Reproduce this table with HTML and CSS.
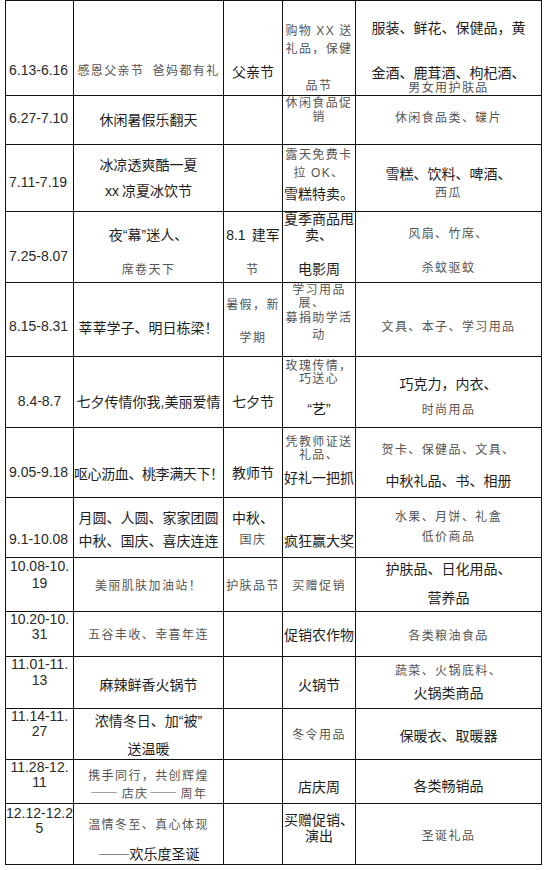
FILE: index.html
```html
<!DOCTYPE html>
<html lang="zh-CN">
<head>
<meta charset="utf-8">
<title>促销活动安排表</title>
<link rel="stylesheet" href="styles.css">
</head>
<body>
<div class="sheet">
  <div class="row r1">
    <div class="cell left p62"><div class="d">6.13-6.16</div></div>
    <div class="cell p63"><div class="s pre">感恩父亲节  爸妈都有礼</div></div>
    <div class="cell p62"><div class="b">父亲节</div></div>
    <div class="cell p23"><div class="s pre">购物 <span class="l">XX</span> 送</div><div class="s m5">礼品，保健</div><div class="s m25">品节</div></div>
    <div class="cell p18"><div class="b">服装、鲜花、保健品，黄</div><div class="b m29">金酒、鹿茸酒、枸杞酒、</div><div class="s m1">男女用护肤品</div></div>
  </div>
  <div class="row r2">
    <div class="cell left p15"><div class="d">6.27-7.10</div></div>
    <div class="cell p15"><div class="b">休闲暑假乐翻天</div></div>
    <div class="cell"></div>
    <div class="cell"><div class="s">休闲食品促</div><div class="s m2">销</div></div>
    <div class="cell p15"><div class="s">休闲食品类、碟片</div></div>
  </div>
  <div class="row r3">
    <div class="cell left p30"><div class="d">7.11-7.19</div></div>
    <div class="cell p11"><div class="b">冰凉透爽酷一夏</div><div class="b m10 pre"><span class="l">xx</span> 凉夏冰饮节</div></div>
    <div class="cell"></div>
    <div class="cell p3"><div class="s">露天免费卡</div><div class="s m6 pre">拉 <span class="l">OK</span>、</div><div class="b m6">雪糕特卖。</div></div>
    <div class="cell p20"><div class="b">雪糕、饮料、啤酒、</div><div class="s m5">西瓜</div></div>
  </div>
  <div class="row r4">
    <div class="cell left p37"><div class="d">7.25-8.07</div></div>
    <div class="cell p14"><div class="b">夜<span class="l">“</span>幕<span class="l">”</span>迷人、</div><div class="s m20">席卷天下</div></div>
    <div class="cell p14"><div class="b pre"><span class="l">8.1</span>  建军</div><div class="s m20">节</div></div>
    <div class="cell"><div class="b mneg2">夏季商品甩</div><div class="b">卖、</div><div class="b m18">电影周</div></div>
    <div class="cell p15"><div class="s">风扇、竹席、</div><div class="s m22">杀蚊驱蚊</div></div>
  </div>
  <div class="row r5">
    <div class="cell left p36"><div class="d">8.15-8.31</div></div>
    <div class="cell p36"><div class="b">莘莘学子、明日栋梁！</div></div>
    <div class="cell p15"><div class="s">暑假，新</div><div class="s m21">学期</div></div>
    <div class="cell"><div class="s">学习用品</div><div class="s m1 shift">展、</div><div class="s m3">募捐助学活</div><div class="s m5">动</div></div>
    <div class="cell p37"><div class="s">文具、本子、学习用品</div></div>
  </div>
  <div class="row r6">
    <div class="cell p37"><div class="d">8.4-8.7</div></div>
    <div class="cell p36"><div class="b">七夕传情你我<span class="l">,</span>美丽爱情</div></div>
    <div class="cell p36"><div class="b">七夕节</div></div>
    <div class="cell p2"><div class="s">玫瑰传情，</div><div class="s m1">巧送心</div><div class="b m16"><span class="l">“</span>艺<span class="l">”</span></div></div>
    <div class="cell p18"><div class="b">巧克力，内衣、</div><div class="s m12">时尚用品</div></div>
  </div>
  <div class="row r7">
    <div class="cell left p37"><div class="d">9.05-9.18</div></div>
    <div class="cell p37"><div class="b tight">呕心沥血、桃李满天下！</div></div>
    <div class="cell p36"><div class="b">教师节</div></div>
    <div class="cell p7"><div class="s">凭教师证送</div><div class="s m1">礼品、</div><div class="b m9">好礼一把抓</div></div>
    <div class="cell p15"><div class="s">贺卡、保健品、文具、</div><div class="b m17">中秋礼品、书、相册</div></div>
  </div>
  <div class="row r8">
    <div class="cell left p34"><div class="d">9.1-10.08</div></div>
    <div class="cell p11"><div class="b">月圆、人圆、家家团圆</div><div class="b m7">中秋、国庆、喜庆连连</div></div>
    <div class="cell p11"><div class="b">中秋、</div><div class="s m8">国庆</div></div>
    <div class="cell p34"><div class="b">疯狂赢大奖</div></div>
    <div class="cell p12"><div class="s">水果、月饼、礼盒</div><div class="s m8">低价商品</div></div>
  </div>
  <div class="row r9">
    <div class="cell p1"><div class="d">10.08-10.</div><div class="d m2">19</div></div>
    <div class="cell p21"><div class="s">美丽肌肤加油站！</div></div>
    <div class="cell p21"><div class="s">护肤品节</div></div>
    <div class="cell p21"><div class="s">买赠促销</div></div>
    <div class="cell p2"><div class="b">护肤品、日化用品、</div><div class="b m13">营养品</div></div>
  </div>
  <div class="row r10">
    <div class="cell"><div class="d">10.20-10.</div><div class="d">31</div></div>
    <div class="cell p16"><div class="s">五谷丰收、幸喜年连</div></div>
    <div class="cell"></div>
    <div class="cell p14"><div class="b">促销农作物</div></div>
    <div class="cell p17"><div class="s">各类粮油食品</div></div>
  </div>
  <div class="row r11">
    <div class="cell"><div class="d">11.01-11.</div><div class="d m1">13</div></div>
    <div class="cell p19"><div class="b">麻辣鲜香火锅节</div></div>
    <div class="cell"></div>
    <div class="cell p19"><div class="b">火锅节</div></div>
    <div class="cell p7"><div class="s">蔬菜、火锅底料、</div><div class="b m8">火锅类商品</div></div>
  </div>
  <div class="row r12">
    <div class="cell"><div class="d">11.14-11.</div><div class="d">27</div></div>
    <div class="cell p3"><div class="b">浓情冬日、加<span class="l">“</span>被<span class="l">”</span></div><div class="b m11">送温暖</div></div>
    <div class="cell"></div>
    <div class="cell p19"><div class="s">冬令用品</div></div>
    <div class="cell p18"><div class="b">保暖衣、取暖器</div></div>
  </div>
  <div class="row r13">
    <div class="cell"><div class="d">11.28-12.</div><div class="d">11</div></div>
    <div class="cell p9"><div class="s">携手同行，共创辉煌</div><div class="s m6 pre"><span class="dash">——</span> 店庆<span class="dash">——</span> 周年</div></div>
    <div class="cell"></div>
    <div class="cell p18"><div class="b">店庆周</div></div>
    <div class="cell p17"><div class="b">各类畅销品</div></div>
  </div>
  <div class="row r14">
    <div class="cell p2"><div class="d">12.12-12.2</div><div class="d">5</div></div>
    <div class="cell p14"><div class="s">温情冬至、真心体现</div><div class="b m15"><span class="dash">——</span>欢乐度圣诞</div></div>
    <div class="cell"></div>
    <div class="cell p7"><div class="b">买赠促销、</div><div class="b">演出</div></div>
    <div class="cell p25"><div class="s">圣诞礼品</div></div>
  </div>
</div>
</body>
</html>
```

FILE: styles.css
```css
html, body {
  margin: 0;
  padding: 0;
  background: #ffffff;
}

body {
  font-family: "Noto Sans CJK SC", "Noto Sans", sans-serif;
  color: #222222;
}

.sheet {
  margin-left: 5px;
  width: 537px;
  box-sizing: border-box;
  border-left: 1px solid #111111;
  border-top: 1px solid #111111;
}

.row {
  display: grid;
  grid-template-columns: 68px 150px 59px 73px 186px;
}

.r1 { height: 95px; }
.r2 { height: 49px; }
.r3 { height: 67px; }
.r4 { height: 71px; }
.r5 { height: 74px; }
.r6 { height: 71px; }
.r7 { height: 70px; }
.r8 { height: 60px; }
.r9 { height: 54px; }
.r10 { height: 45px; }
.r11 { height: 52px; }
.r12 { height: 51px; }
.r13 { height: 44px; }
.r14 { height: 61px; }

.cell {
  box-sizing: border-box;
  border-right: 1px solid #111111;
  border-bottom: 1px solid #111111;
  text-align: center;
  white-space: nowrap;
  min-width: 0;
}

.cell.left {
  text-align: left;
  padding-left: 3px;
}

/* line types */
.d {
  font-family: "Liberation Sans", Arial, sans-serif;
  font-size: 14px;
  line-height: 15px;
  color: #2a2a2a;
}

.b {
  font-size: 14px;
  line-height: 16px;
  color: #1e1e1e;
}

.s {
  font-size: 12px;
  line-height: 12px;
  letter-spacing: 1.4px;
  color: #555555;
}

.l {
  font-family: "Liberation Sans", Arial, sans-serif;
}

.dash {
  letter-spacing: 0;
  font-feature-settings: "fwid" 1;
  display: inline-block;
  transform: scaleX(1.15);
  margin: 0 2px;
}

.pre { white-space: pre; }
.tight { letter-spacing: -0.4px; }
.shift { padding-right: 14px; }

/* top offsets inside cells */
.p1 { padding-top: 1px; }
.p2 { padding-top: 2px; }
.p3 { padding-top: 3px; }
.p7 { padding-top: 7px; }
.p9 { padding-top: 9px; }
.p11 { padding-top: 11px; }
.p12 { padding-top: 12px; }
.p14 { padding-top: 14px; }
.p15 { padding-top: 15px; }
.p16 { padding-top: 16px; }
.p17 { padding-top: 17px; }
.p18 { padding-top: 18px; }
.p19 { padding-top: 19px; }
.p20 { padding-top: 20px; }
.p21 { padding-top: 21px; }
.p23 { padding-top: 23px; }
.p25 { padding-top: 25px; }
.p30 { padding-top: 30px; }
.p34 { padding-top: 34px; }
.p36 { padding-top: 36px; }
.p37 { padding-top: 37px; }
.p62 { padding-top: 62px; }
.p63 { padding-top: 63px; }

/* gaps between lines */
.mneg2 { margin-top: -2px; }
.m1 { margin-top: 1px; }
.m2 { margin-top: 2px; }
.m3 { margin-top: 3px; }
.m5 { margin-top: 5px; }
.m6 { margin-top: 6px; }
.m7 { margin-top: 7px; }
.m8 { margin-top: 8px; }
.m9 { margin-top: 9px; }
.m10 { margin-top: 10px; }
.m11 { margin-top: 11px; }
.m12 { margin-top: 12px; }
.m13 { margin-top: 13px; }
.m15 { margin-top: 15px; }
.m16 { margin-top: 16px; }
.m17 { margin-top: 17px; }
.m18 { margin-top: 18px; }
.m20 { margin-top: 20px; }
.m21 { margin-top: 21px; }
.m22 { margin-top: 22px; }
.m25 { margin-top: 25px; }
.m29 { margin-top: 29px; }
```
